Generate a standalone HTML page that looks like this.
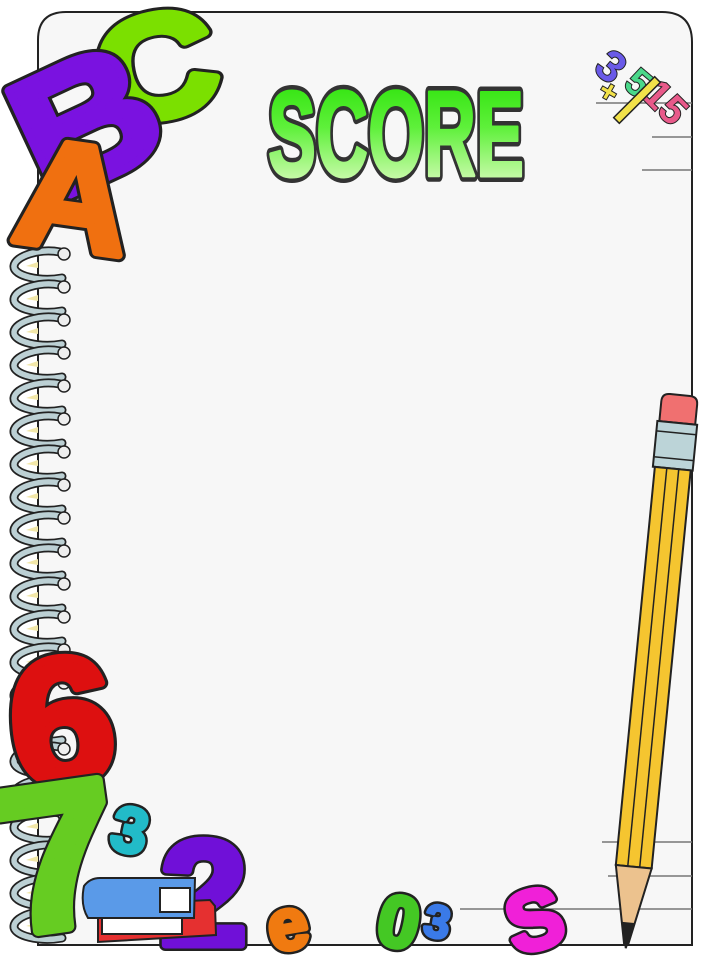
<!DOCTYPE html>
<html><head><meta charset="utf-8"><style>
html,body{margin:0;padding:0;background:#fff;width:705px;height:960px;overflow:hidden}
svg{display:block}
text{font-family:"Liberation Sans",sans-serif;font-weight:bold}
.o{stroke:#222;stroke-linejoin:round;fill:#222}
.f{stroke-linejoin:round}
</style></head><body>
<svg width="705" height="960" viewBox="0 0 705 960" xmlns="http://www.w3.org/2000/svg">
<defs>
<linearGradient id="g" x1="0" y1="0" x2="0" y2="1">
<stop offset="0" stop-color="#22e000"/><stop offset="0.45" stop-color="#5ef03a"/><stop offset="1" stop-color="#f4ffd8"/>
</linearGradient>
</defs>
<path d="M38 40 Q38 12 66 12 L662 12 Q692 12 692 42 L692 945 L38 945 Z" fill="#f7f7f7" stroke="#222" stroke-width="2"/>
<g stroke="#777" stroke-width="1.5">
<line x1="596" y1="103" x2="692" y2="103"/><line x1="652" y1="137" x2="692" y2="137"/><line x1="642" y1="170" x2="692" y2="170"/>
<line x1="602" y1="842" x2="692" y2="842"/><line x1="608" y1="876" x2="692" y2="876"/><line x1="460" y1="909" x2="692" y2="909"/>
</g>
<g id="r"><path d="M60 252 C40 248 15 256 14 266 C13 276 40 282 62 278" fill="none" stroke="#222" stroke-width="9" stroke-linecap="round"/>
<path d="M60 252 C40 248 15 256 14 266 C13 276 40 282 62 278" fill="none" stroke="#bcd0d4" stroke-width="5.5" stroke-linecap="round"/>
<path d="M38 268 L38 262 L26 266 Z" fill="#f2e7a8"/>
<circle cx="64" cy="254" r="6" fill="#eee" stroke="#222" stroke-width="1.5"/></g>
<use href="#r" y="33"/><use href="#r" y="66"/><use href="#r" y="99"/><use href="#r" y="132"/><use href="#r" y="165"/><use href="#r" y="198"/><use href="#r" y="231"/><use href="#r" y="264"/><use href="#r" y="297"/><use href="#r" y="330"/><use href="#r" y="363"/><use href="#r" y="396"/><use href="#r" y="429"/><use href="#r" y="462"/><use href="#r" y="495"/><use href="#r" y="528"/><use href="#r" y="561"/><use href="#r" y="594"/><use href="#r" y="627"/><use href="#r" y="660"/>
<!-- ABC -->
<g transform="translate(108,128) rotate(-12) scale(1.15,1)"><text class="o" font-size="145" stroke-width="14">C</text><text class="f" font-size="145" fill="#7be000" stroke="#7be000" stroke-width="8">C</text></g>
<g transform="translate(48,205) rotate(-25) scale(1.1,1)"><text class="o" font-size="175" stroke-width="14">B</text><text class="f" font-size="175" fill="#7a12e0" stroke="#7a12e0" stroke-width="8">B</text></g>
<g transform="translate(10,240) rotate(8) scale(1.05,1)"><text class="o" font-size="150" stroke-width="14">A</text><text class="f" font-size="150" fill="#f07010" stroke="#f07010" stroke-width="8">A</text></g>
<!-- SCORE -->
<text x="396" y="176" text-anchor="middle" font-family="'Liberation Sans Narrow','Liberation Sans',sans-serif" font-weight="bold" font-size="122" textLength="256" lengthAdjust="spacingAndGlyphs" fill="#333" stroke="#333" stroke-width="12" style="stroke-linejoin:round">SCORE</text>
<text x="396" y="176" text-anchor="middle" font-family="'Liberation Sans Narrow','Liberation Sans',sans-serif" font-weight="bold" font-size="122" textLength="256" lengthAdjust="spacingAndGlyphs" fill="url(#g)" stroke="url(#g)" stroke-width="3" style="stroke-linejoin:round">SCORE</text>
<!-- fraction -->
<g style="stroke:#222;stroke-width:2;paint-order:stroke">
<text font-size="44" fill="#6a5ae8" transform="translate(592,70) rotate(40)">3</text>
<text font-size="30" fill="#f2e24a" transform="translate(596,96) rotate(30)">+</text>
<text font-size="38" fill="#4ad88a" transform="translate(622,86) rotate(40)">5</text>
<text font-size="40" fill="#e85a8a" transform="translate(640,96) rotate(45)">15</text>
</g>
<rect x="608" y="96" width="58" height="8" fill="#f2e24a" stroke="#222" stroke-width="1.5" transform="rotate(-45 637 100)"/>
<!-- pencil -->
<g transform="translate(680,395) rotate(5.6)">
<path d="M-18 8 Q-18 0 -10 0 L10 0 Q18 0 18 8 L18 28 L-18 28 Z" fill="#f07070" stroke="#222" stroke-width="2"/>
<rect x="-20" y="28" width="40" height="46" fill="#bcd4d8" stroke="#222" stroke-width="2"/>
<line x1="-20" y1="38" x2="20" y2="38" stroke="#222" stroke-width="1.5"/><line x1="-20" y1="64" x2="20" y2="64" stroke="#222" stroke-width="1.5"/>
<rect x="-18" y="74" width="36" height="400" fill="#f5c530" stroke="#222" stroke-width="2"/>
<line x1="-6" y1="74" x2="-6" y2="474" stroke="#222" stroke-width="1.5"/><line x1="6" y1="74" x2="6" y2="474" stroke="#222" stroke-width="1.5"/>
<path d="M-18 474 L18 474 L2 552 L-2 552 Z" fill="#ecc28e" stroke="#222" stroke-width="2"/>
<path d="M-6 530 L6 530 L1 556 L-1 556 Z" fill="#222"/>
</g>
<!-- bottom-left numbers -->
<g transform="translate(15,788) rotate(-5) scale(1.05,1)"><text class="o" font-size="180" stroke-width="14">6</text><text class="f" font-size="180" fill="#dd1010" stroke="#dd1010" stroke-width="8">6</text></g>
<g transform="translate(8,935) rotate(-8) scale(1.1,1.05)"><text class="o" font-size="195" stroke-width="14">7</text><text class="f" font-size="195" fill="#66cc22" stroke="#66cc22" stroke-width="10">7</text></g>
<g transform="translate(108,848) rotate(12)"><text class="o" font-size="64" stroke-width="9">3</text><text class="f" font-size="64" fill="#22bbc8" stroke="#22bbc8" stroke-width="4">3</text></g>
<g transform="translate(160,945) scale(1.05,1)"><text class="o" font-size="150" stroke-width="12">2</text><text class="f" font-size="150" fill="#7010d8" stroke="#7010d8" stroke-width="7">2</text></g>
<g stroke="#222" stroke-width="2">
<path d="M98 905 L210 900 L215 906 L216 935 L98 942 Z" fill="#e53030"/>
<rect x="102" y="914" width="80" height="20" fill="#fff"/>
<path d="M84 886 Q90 878 100 878 L195 878 L194 918 L88 918 Q80 905 84 886 Z" fill="#5a9ae8"/>
<rect x="160" y="888" width="30" height="24" fill="#fff"/>
</g>
<g transform="translate(272,952) rotate(-10)"><text class="o" font-size="72" stroke-width="10">e</text><text class="f" font-size="72" fill="#f07a10" stroke="#f07a10" stroke-width="5">e</text></g>
<g transform="translate(374,942) rotate(12)"><text class="o" font-size="72" stroke-width="10">0</text><text class="f" font-size="72" fill="#44c824" stroke="#44c824" stroke-width="5">0</text></g>
<g transform="translate(422,935) rotate(10)"><text class="o" font-size="46" stroke-width="8">3</text><text class="f" font-size="46" fill="#3a7ae8" stroke="#3a7ae8" stroke-width="3">3</text></g>
<g transform="translate(515,955) rotate(-15)"><text class="o" font-size="84" stroke-width="10">S</text><text class="f" font-size="84" fill="#f020d8" stroke="#f020d8" stroke-width="5">S</text></g>
</svg>
</body></html>
